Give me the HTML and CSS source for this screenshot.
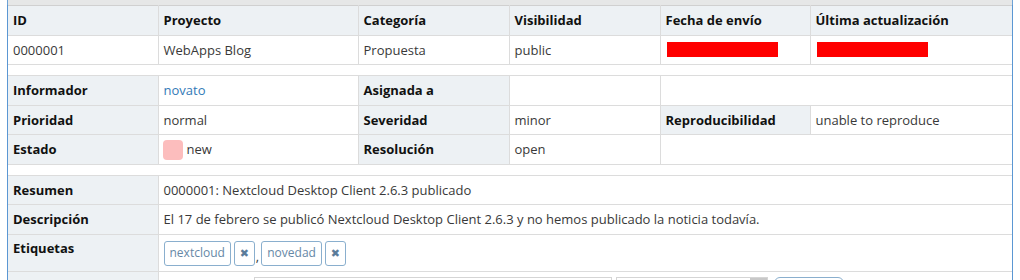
FILE: index.html
```html
<!DOCTYPE html>
<html lang="es">
<head>
<meta charset="utf-8">
<title>Detalles</title>
<link rel="stylesheet" href="styles.css">
</head>
<body>
<div class="widget">
  <div class="topstrip"></div>
  <div class="box">
    <table class="details">
      <colgroup>
        <col class="c1"><col class="c2"><col class="c3"><col class="c4"><col class="c5"><col class="c6">
      </colgroup>
      <thead>
        <tr class="head">
          <th>ID</th><th>Proyecto</th><th>Categoría</th><th>Visibilidad</th><th>Fecha de envío</th><th>Última actualización</th>
        </tr>
      </thead>
      <tbody>
        <tr>
          <td>0000001</td><td>WebApps Blog</td><td>Propuesta</td><td>public</td>
          <td><span class="redact"></span></td><td><span class="redact"></span></td>
        </tr>
        <tr class="spacer"><td colspan="6"></td></tr>
        <tr>
          <th class="cat">Informador</th><td><a class="link" href="#">novato</a></td>
          <th class="cat">Asignada a</th><td></td>
          <td colspan="2"></td>
        </tr>
        <tr>
          <th class="cat">Prioridad</th><td>normal</td>
          <th class="cat">Severidad</th><td>minor</td>
          <th class="cat">Reproducibilidad</th><td>unable to reproduce</td>
        </tr>
        <tr>
          <th class="cat">Estado</th><td><span class="status"><span class="statusbox"></span>new</span></td>
          <th class="cat">Resolución</th><td>open</td>
          <td colspan="2"></td>
        </tr>
        <tr class="spacer"><td colspan="6"></td></tr>
        <tr>
          <th class="cat">Resumen</th><td colspan="5">0000001: Nextcloud Desktop Client 2.6.3 publicado</td>
        </tr>
        <tr>
          <th class="cat">Descripción</th><td colspan="5">El 17 de febrero se publicó Nextcloud Desktop Client 2.6.3 y no hemos publicado la noticia todavía.</td>
        </tr>
        <tr class="tagrow">
          <th class="cat">Etiquetas</th>
          <td colspan="5">
            <div class="tags">
              <span class="tag">nextcloud</span><span class="tagx">✖</span><span class="comma">,</span><span class="tag">novedad</span><span class="tagx">✖</span>
            </div>
          </td>
        </tr>
        <tr class="attach">
          <th class="cat"></th>
          <td colspan="5">
            <div class="attachform">
              <span class="input"></span><span class="select"><span class="arrow"></span></span><span class="applybtn"></span>
            </div>
          </td>
        </tr>
      </tbody>
    </table>
  </div>
</div>
</body>
</html>
```

FILE: styles.css
```css
html, body {
  margin: 0;
  padding: 0;
  background: #ffffff;
}
body {
  font-family: "Open Sans", "Liberation Sans", sans-serif;
  font-size: 13px;
  line-height: 1.42857;
  color: #393939;
  overflow: hidden;
  height: 280px;
}
.widget {
  margin-left: 7px;
  width: 1006px;
}
.topstrip {
  height: 5px;
  background: #e6e7e7;
  border-left: 1px solid #6fa3d6;
  border-right: 1px solid #6fa3d6;
}
.box {
  border-left: 1px solid #5b97d3;
  border-right: 1px solid #5b97d3;
  background: #fff;
}
.details {
  width: 1004px;
  table-layout: fixed;
  border-collapse: collapse;
  border-spacing: 0;
}
.c1 { width: 150px; }
.c2 { width: 200px; }
.c3 { width: 151px; }
.c4 { width: 151px; }
.c5 { width: 150px; }
.c6 { width: 202px; }
.details th,
.details td {
  border: 1px solid #dcdcdc;
  padding: 5px 6px 5px 5px;
  text-align: left;
  vertical-align: middle;
  white-space: nowrap;
  overflow: hidden;
}
.details th {
  font-weight: 700;
  color: #111;
  background: #edf1f4;
}
.details tr.head th {
  border-top-color: #d0d0d0;
}
.details th:first-child,
.details td:first-child {
  border-left: 0;
}
.details th:last-child,
.details td:last-child {
  border-right: 0;
}
.details tr.spacer td {
  height: 10px;
  padding: 0;
  background: #fff;
}
.redact {
  display: block;
  width: 111px;
  height: 15px;
  background: #ff0000;
  margin-left: 1px;
}
.link {
  color: #337ab7;
  text-decoration: none;
}
.status {
  display: flex;
  align-items: center;
  gap: 4px;
}
.statusbox {
  display: inline-block;
  width: 20px;
  height: 20px;
  margin: -1px 0 -1px -1px;
  border-radius: 4px;
  background: #fcbdbd;
}
.tagrow th {
  vertical-align: top;
  padding-top: 4px;
}
.tagrow td {
  padding-top: 6px;
  padding-bottom: 5px;
}
.tags {
  display: flex;
  align-items: flex-end;
}
.tag,
.tagx {
  box-sizing: border-box;
  height: 25px;
  display: inline-flex;
  align-items: center;
  justify-content: center;
  border: 1px solid #8aafce;
  border-radius: 3px;
  background: #fff;
  color: #6688a6;
  font-size: 12px;
  line-height: 1;
}
.tag {
  padding: 0 5px;
  margin-right: 3px;
}
.tagx {
  width: 21px;
  font-family: "DejaVu Sans", sans-serif;
  font-size: 11px;
  color: #5b7c9b;
}
.comma {
  margin: 0 2px 3px 1px;
  color: #393939;
  line-height: 1;
}
.attach th, .attach td {
  height: 30px;
  vertical-align: top;
}
.attachform {
  display: flex;
  gap: 4px;
  padding-left: 90px;
}
.input {
  display: block;
  width: 356px;
  height: 28px;
  border: 1px solid #d5d5d5;
}
.select {
  display: block;
  position: relative;
  width: 150px;
  height: 28px;
  border: 1px solid #d5d5d5;
}
.arrow {
  position: absolute;
  right: 0;
  top: 0;
  width: 17px;
  height: 28px;
  background: #c8c8c8;
}
.applybtn {
  display: block;
  width: 68px;
  height: 28px;
  margin-left: 2px;
  border: 1px solid #8aafce;
  border-radius: 6px;
}
```
